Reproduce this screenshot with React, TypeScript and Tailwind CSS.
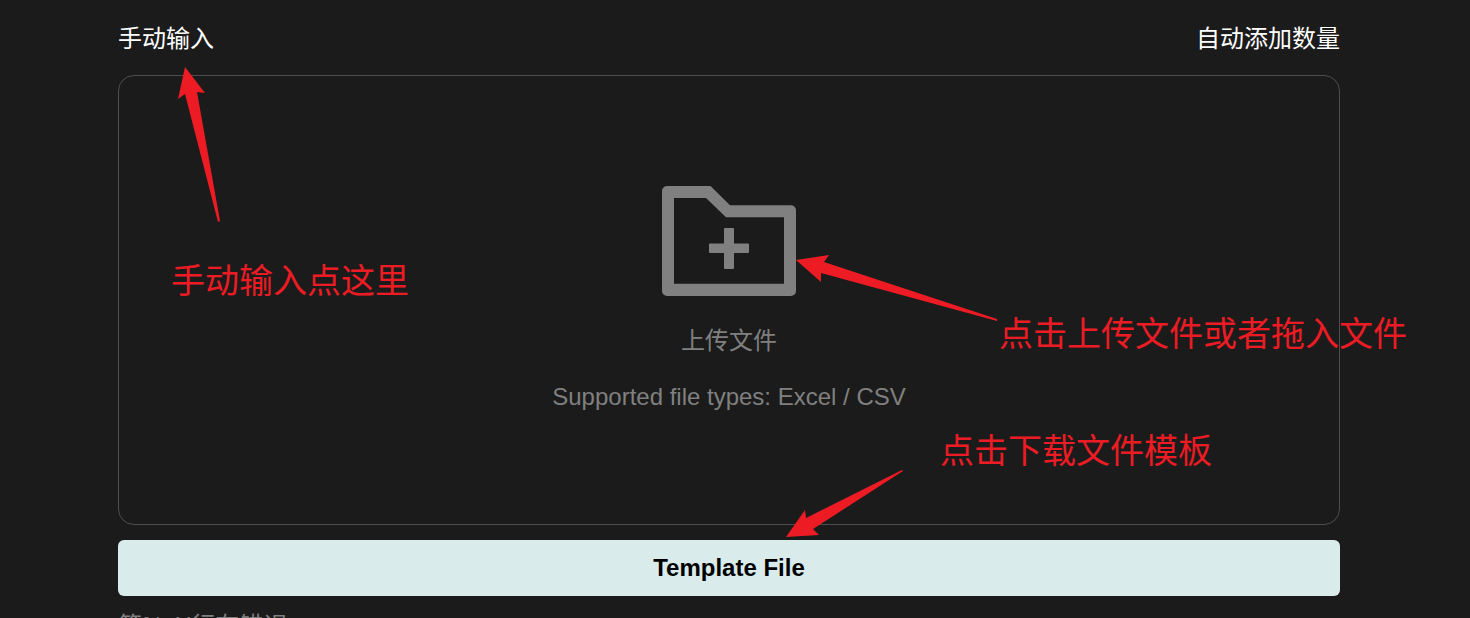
import React from "react";

type ArrowProps = { className: string; width: number; height: number; points: string };

function Arrow({ className, width, height, points }: ArrowProps) {
  return (
    <svg
      className={`pointer-events-none absolute max-w-none ${className}`}
      width={width}
      height={height}
      viewBox={`0 0 ${width} ${height}`}
      aria-hidden="true"
    >
      <polygon points={points} fill="#ed1c24" />
    </svg>
  );
}

function Note({ className, children }: { className: string; children: React.ReactNode }) {
  return (
    <p
      className={`pointer-events-none absolute font-['Noto_Sans_CJK_SC',sans-serif] text-[34px] leading-10 whitespace-nowrap text-[#ed1c24] ${className}`}
    >
      {children}
    </p>
  );
}

function FolderPlusIcon() {
  return (
    <svg width="134" height="110" viewBox="0 0 134 110" fill="#808080" aria-hidden="true">
      <path
        fillRule="evenodd"
        d="M5 0H48.5L68 19.3H129a5 5 0 0 1 5 5V105a5 5 0 0 1-5 5H5a5 5 0 0 1-5-5V5A5 5 0 0 1 5 0ZM12 12V97.7H122V31.3H64L44 12Z"
      />
      <rect x="62" y="42" width="10" height="41" rx="1" />
      <rect x="47" y="57.5" width="40" height="9.5" rx="1" />
    </svg>
  );
}

export default function App() {
  return (
    <div className="h-screen overflow-hidden bg-[#1b1b1b] pr-[130px] pl-[118px] font-['Liberation_Sans','Noto_Sans_CJK_SC',sans-serif] text-2xl text-[#808080]">
      <header className="flex h-[75px] items-center justify-between pt-0.5 text-white">
        <button type="button">手动输入</button>
        <button type="button">自动添加数量</button>
      </header>

      <main className="flex flex-col">
        <section className="relative">
          <button
            type="button"
            className="flex h-[450px] w-full flex-col items-center rounded-2xl border border-[#4d4d4d] pt-[110px]"
          >
            <FolderPlusIcon />
            <span className="mt-[29px] leading-8">上传文件</span>
            <span className="mt-6 leading-8">Supported file types: Excel / CSV</span>
          </button>

          <Arrow
            className="-top-2 left-[59px]"
            width={44}
            height={156}
            points="8,0 28,26 20,25 43,154 41,155 8,27 1,32"
          />
          <Note className="top-[184px] left-[53px]">手动输入点这里</Note>

          <Arrow
            className="top-[179px] left-[calc(50%+67px)]"
            width={202}
            height={68}
            points="0,6 33,1 28,8 201,65 201,67 25,19 25,28"
          />
          <Note className="top-[237px] left-[calc(50%+270px)]">点击上传文件或者拖入文件</Note>

          <Note className="top-[354px] left-[calc(50%+211px)]">点击下载文件模板</Note>
          <Arrow
            className="top-[394px] left-[calc(50%+57px)]"
            width={118}
            height={70}
            points="0,68 19,41 20,49 116,1 117,2 27,60 33,66"
          />
        </section>

        <button
          type="button"
          className="mt-[15px] h-14 rounded-md bg-[#d9ebea] font-bold text-black"
        >
          Template File
        </button>
        <p className="mt-[14px] leading-8">第%sX行有错误</p>
      </main>
    </div>
  );
}
